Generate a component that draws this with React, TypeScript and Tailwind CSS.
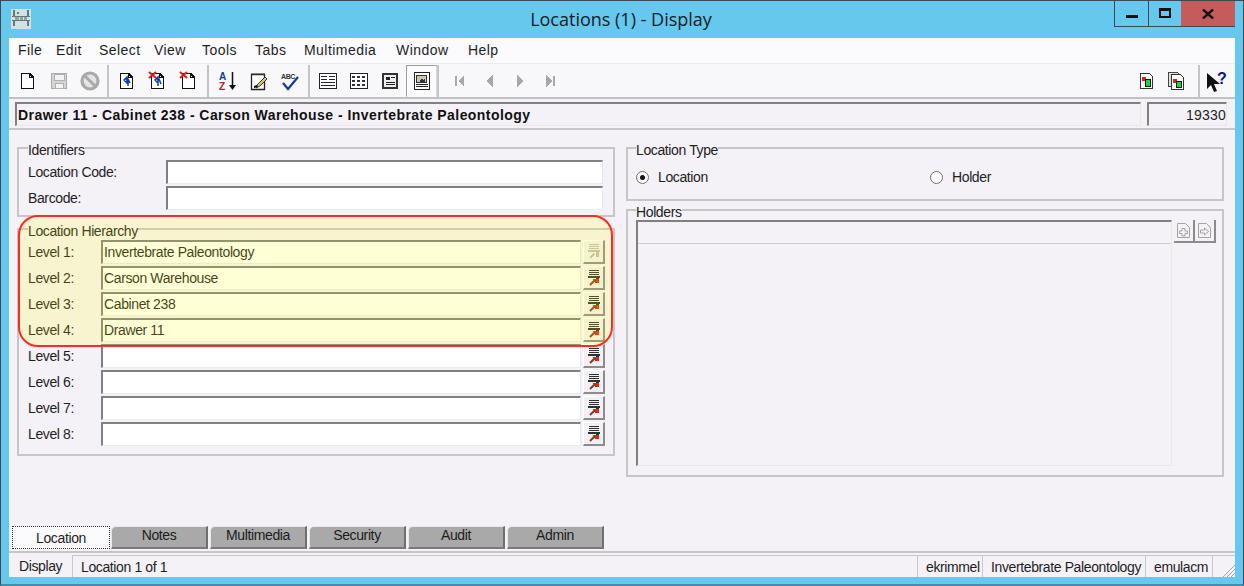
import React from "react";

const S = ({ children, w = 20, h = 20 }: { children: React.ReactNode; w?: number; h?: number }) => (
  <svg width={w} height={h} viewBox={`0 0 ${w} ${h}`} shapeRendering="crispEdges" fill="none">{children}</svg>
);

const Page = ({ x = 3, c = "#111" }: { x?: number; c?: string }) => (
  <path d={`M${x + .5} 2.500h8l4 4v11h-12z M${x + 8.500} 2.500v4h4`} fill="#fff" stroke={c} strokeWidth="1.500" />
);
const Cross = () => <path d="M1 1l7 6M8 1l-7 6" stroke="#e01818" strokeWidth="2" shapeRendering="auto" />;

const icons: Record<string, React.ReactNode> = {
  new: <S><Page /></S>,
  save: <S><path d="M2.500 2.500h15v15h-15z" fill="#d4d4d4" stroke="#aaa" strokeWidth="1.500" /><path d="M5 3h10v6H5zM6 12h8v5H6z" fill="#f2f2f2" stroke="#b0b0b0" /></S>,
  cancel: <S><g shapeRendering="auto"><circle cx="10" cy="10" r="8" stroke="#a9a9a9" strokeWidth="3.200" fill="#e4e4e4" /><path d="M5 5l10 10" stroke="#a9a9a9" strokeWidth="3" /></g></S>,
  rec1: <S><Page x={3} /><g shapeRendering="auto"><path d="M11 15V9M7 9l3-3v6zM8 8h3l2 4" stroke="#123a9a" strokeWidth="1.500" /></g></S>,
  rec2: <S><Page x={3} /><g shapeRendering="auto"><path d="M10 15V10M7 9l3-3v6zM8 8h3l2 5" stroke="#123a9a" strokeWidth="1.500" /><Cross /></g></S>,
  rec3: <S><Page x={3} /><g shapeRendering="auto"><Cross /></g></S>,
  sort: (
    <S>
      <g shapeRendering="auto">
        <text x="1" y="9" fontSize="10" fontWeight="700" fill="#123a9a" fontFamily="Liberation Sans, sans-serif">A</text>
        <text x="1" y="19" fontSize="10" fontWeight="700" fill="#a82828" fontFamily="Liberation Sans, sans-serif">Z</text>
        <path d="M14.500 1v15" stroke="#111" strokeWidth="1.500" />
        <path d="M11 14h7l-3.500 5z" fill="#111" />
      </g>
    </S>
  ),
  note: (
    <S>
      <g shapeRendering="auto">
        <path d="M2.500 3.500h13v15h-13z" fill="#fff" stroke="#222" strokeWidth="1.300" />
        <path d="M3 2v2M5 2v2M7 2v2M9 2v2M11 2v2M13 2v2M15 2v2" stroke="#444" />
        <path d="M8 14l8-8 2 2-7 7-4 2z" fill="#e8c83a" stroke="#123a9a" />
        <path d="M5 15l3-1 1 2-4 1z" fill="#111" />
      </g>
    </S>
  ),
  spell: (
    <S>
      <g shapeRendering="auto">
        <text x="1" y="8" fontSize="7" fontWeight="700" fill="#333" fontFamily="Liberation Sans, sans-serif">ABC</text>
        <path d="M3 12l5 6L18 6" stroke="#123a9a" strokeWidth="2.200" />
      </g>
    </S>
  ),
  list: (
    <S>
      <path d="M1.500 2.500h17v15h-17z" fill="#fff" stroke="#222" strokeWidth="1.500" />
      <path d="M3 5h6v1H3zM3 8h6v1H3zM3 11h14v1H3zM3 14h14v1H3zM11 5h6v1h-6zM11 8h6v1h-6z" fill="#222" />
    </S>
  ),
  grid: (
    <S>
      <path d="M1.500 2.500h17v15h-17z" fill="#fff" stroke="#222" strokeWidth="1.500" />
      <path d="M3 5h3v2H3zM8 5h3v2H8zM13 5h3v2h-3zM3 9h3v2H3zM8 9h3v2H8zM13 9h3v2h-3zM3 13h3v2H3zM8 13h3v2H8zM13 13h3v2h-3z" fill="#333" />
    </S>
  ),
  form: (
    <S>
      <path d="M2 2h16v16H2z" fill="#333" />
      <path d="M4 4h12v12H4z" fill="#eee" />
      <path d="M6 6h4v3H6zM6 11h9v1H6zM6 13h9v1H6zM11 6h4v1h-4z" fill="#222" />
    </S>
  ),
  media: (
    <S>
      <path d="M2.500 1.500h15v17h-15z" fill="#fff" stroke="#222" strokeWidth="1.500" />
      <path d="M4.500 4.500h10v7h-10z" fill="#c8c8c8" stroke="#333" />
      <path d="M6 6h2v2H6z" fill="#e8d020" />
      <path d="M8 10l2-3 1 2 2-2v4H8z" fill="#333" />
      <path d="M4 13h12v1H4zM4 15h12v1H4z" fill="#222" />
    </S>
  ),
  first: <S w={12} h={14}><path d="M1 2h2v10H1zM10 1v12L4 7z" fill="#a8a8a8" /></S>,
  prev: <S w={10} h={14}><path d="M8 1v12L1 7z" fill="#a8a8a8" /></S>,
  next: <S w={10} h={14}><path d="M2 1v12l7-6z" fill="#a8a8a8" /></S>,
  last: <S w={12} h={14}><path d="M9 2h2v10H9zM2 1v12l6-6z" fill="#a8a8a8" /></S>,
  copy1: <S><path d="M3.500 2.500h9l3 3v12h-12z" fill="#fff" stroke="#333" strokeWidth="1.300" /><path d="M5 6h4v4H5z" fill="#e02020" /><path d="M8 8h6v8H8z" fill="#111" /><path d="M9 9h4v6H9z" fill="#18d838" /></S>,
  copy2: <S><path d="M1.500 1.500h9l3 3v11h-12z" fill="#ddd" stroke="#444" /><path d="M4.500 3.500h9l3 3v12h-12z" fill="#fff" stroke="#333" strokeWidth="1.300" /><path d="M6 8h4v4H6z" fill="#e02020" /><path d="M9 10h6v7H9z" fill="#111" /><path d="M10 11h4v5h-4z" fill="#18d838" /></S>,
  help: (
    <S w={22} h={22}>
      <g shapeRendering="auto">
        <path d="M1 3v16l4-4 3 7 3-1-3-7h6z" fill="#111" />
        <text x="11" y="14" fontSize="16" fontWeight="700" fill="#12128c" fontFamily="Liberation Sans, sans-serif">?</text>
      </g>
    </S>
  ),
};

const Tool = ({ k, pressed, w = "w-[31px]" }: { k: string; pressed?: boolean; w?: string }) => (
  <div
    className={`${w} h-[32px] flex items-center justify-center shrink-0 ${
      pressed ? "bg-[#fbfafc] border-t border-l border-[#9c9c9c] border-r border-r-[#d8d8d8] border-b border-b-[#f8f8f8] ml-[1px]" : ""
    }`}
  >
    {icons[k]}
  </div>
);
const Sep = ({ w = "w-[6px]", j = "justify-center" }: { w?: string; j?: string }) => (
  <div className={`${w} h-[32px] flex ${j} shrink-0`}>
    <div className="w-[2px] h-full bg-[#c4c4c4]" />
  </div>
);

const Sunken = ({ children, className = "" }: { children?: React.ReactNode; className?: string }) => (
  <div
    className={`border-t-2 border-l-2 border-t-[#808080] border-l-[#808080] border-r border-b border-r-[#e9e9e9] border-b-[#e9e9e9] leading-[20px] px-[1px] overflow-hidden whitespace-nowrap ${className}`}
  >
    {children}
  </div>
);

const Group = ({ title, className = "", children }: { title: string; className?: string; children: React.ReactNode }) => (
  <fieldset className={`border-2 border-[#c6c6c8] min-w-0 ${className}`}>
    <legend className="relative top-[2px] px-0 leading-[12px] text-[#222] h-[12px]">{title}</legend>
    {children}
  </fieldset>
);

const PickIcon = ({ off }: { off?: boolean }) => (
  <svg width="14" height="17" viewBox="0 0 14 17" shapeRendering="crispEdges">
    <path d="M2 1h10v1H2zM2 3h10v1H2zM2 5h10v1H2zM1 7h12v1.500H1zM9 8h3v6H9z" fill={off ? "#bcbcb8" : "#303030"} />
    {off ? (
      <path d="M3 15l4-4" stroke="#bcbcb8" strokeWidth="2" />
    ) : (
      <>
        <path d="M6 10h6v4H8z" fill="#ee2010" />
        <path d="M3 16l5-5" stroke="#8a3820" strokeWidth="2" shapeRendering="auto" />
      </>
    )}
  </svg>
);

const Pick = ({ off }: { off?: boolean }) => (
  <div className="w-[22px] h-[24px] shrink-0 flex items-center justify-center border-r-2 border-b-2 border-r-[#8c8c8c] border-b-[#8c8c8c] border-t border-l border-t-white border-l-white bg-[#f3f0f5]">
    <PickIcon off={off} />
  </div>
);

const levels = ["Invertebrate Paleontology", "Carson Warehouse", "Cabinet 238", "Drawer 11", "", "", "", ""];

const Radio = ({ on, label }: { on?: boolean; label: string }) => (
  <div className="flex items-center gap-[9px]">
    <div className="w-[13px] h-[13px] rounded-full border border-[#707070] bg-white flex items-center justify-center">
      {on && <div className="w-[5px] h-[5px] rounded-full bg-[#111]" />}
    </div>
    <span>{label}</span>
  </div>
);

const Tab = ({ label }: { label: string }) => (
  <div className="w-[97px] h-[23px] mr-[2px] bg-[#a9a9a9] rounded-tl-[5px] border-t border-l border-t-[#e8e8e8] border-l-[#e8e8e8] border-r-2 border-b-2 border-r-[#6f6f6f] border-b-[#7a7a7a] flex items-start justify-center leading-[17px] text-[#1c1c1c] shrink-0">
    {label}
  </div>
);

const Status = ({ className = "", children }: { className?: string; children?: React.ReactNode }) => (
  <div className={`h-[22px] border-t border-l border-[#c8c8c8] pl-[8px] leading-[22px] whitespace-nowrap shrink-0 ${className}`}>{children}</div>
);

const menu: [string, string][] = [
  ["File", "w-[38px]"],
  ["Edit", "w-[43px]"],
  ["Select", "w-[55px]"],
  ["View", "w-[48px]"],
  ["Tools", "w-[53px]"],
  ["Tabs", "w-[49px]"],
  ["Multimedia", "w-[92px]"],
  ["Window", "w-[72px]"],
  ["Help", "w-[40px]"],
];

export default function App() {
  return (
    <div
      className="w-[1244px] h-[586px] overflow-hidden bg-[#65c8ec] border border-[#3d4a52] border-b-[2px] border-b-[#4c8ba4] flex flex-col text-[14px] tracking-[-0.38px] text-[#1e1e1e]"
      style={{ fontFamily: '"Liberation Sans", Arial, sans-serif' }}
    >
      <div className="h-[37px] shrink-0 flex items-start">
        <div className="w-[1124px] h-[37px] pt-[7px] relative shrink-0 flex justify-center">
          <svg className="absolute left-[10px] top-[8px]" width="20" height="20" viewBox="0 0 20 20" shapeRendering="crispEdges">
            <path d="M0 0h20v20H0z" fill="#cfe2e4" />
            <path d="M2 1h2v6H2zM16 1h2v6h-2zM6 3h2v2H6zM1 7h18v1H1zM1 11h18v1H1zM2 12h2v5H2zM16 12h2v5h-2z" fill="#6c7678" />
            <path d="M4 8h4v3H4zM9 8h3v3H9zM13 8h3v3h-3z" fill="#8ea4a6" />
          </svg>
          <span className="text-[18px] tracking-normal leading-[22px] text-[#102028] ml-[116px]" style={{ fontFamily: '"Open Sans", sans-serif' }}>
            Locations (1) - Display
          </span>
        </div>
        <div className="h-[26px] flex border-l border-b border-[#3d4a52] ml-[-11px] shrink-0">
          <div className="w-[34px] h-full flex items-center justify-center border-r border-[#3d4a52]">
            <div className="w-[12px] h-[3px] bg-[#111] mt-[6px]" />
          </div>
          <div className="w-[32px] h-full flex items-center justify-center">
            <div className="w-[12px] h-[10px] border-2 border-[#111] border-t-[3px] mb-[1px]" />
          </div>
          <div className="w-[54px] h-full flex items-center justify-center bg-[#c45c5c]">
            <svg width="12" height="10" viewBox="0 0 12 10"><path d="M1 .5l10 9M11 .5l-10 9" stroke="#111" strokeWidth="2.400" /></svg>
          </div>
        </div>
      </div>

      <div className="mx-[8px] mb-[7px] flex-1 min-h-0 bg-[#f5f2f7] flex flex-col relative">
        <div className="h-[25px] shrink-0 flex items-center pl-[9px] bg-[#fbfafc] leading-[25px] tracking-[0.45px]">
          {menu.map(([m, w]) => (
            <span key={m} className={`${w} shrink-0`}>{m}</span>
          ))}
        </div>

        <div className="h-[36px] shrink-0 flex items-center pl-[3px] pr-[1px] bg-[#f8f7fa] border-t border-[#ececec] border-b-2 border-b-[#c2c2c2]">
          <Tool k="new" /><Tool k="save" /><Tool k="cancel" /><Sep />
          <Tool k="rec1" /><Tool k="rec2" /><Tool k="rec3" /><Sep w="w-[8px]" />
          <Tool k="sort" /><Tool k="note" /><Tool k="spell" /><Sep w="w-[7px]" />
          <Tool k="list" /><Tool k="grid" /><Tool k="form" /><Tool k="media" pressed /><Sep w="w-[8px]" j="justify-start" />
          <Tool k="first" w="w-[30px]" /><Tool k="prev" w="w-[30px]" /><Tool k="next" w="w-[30px]" /><Tool k="last" w="w-[30px]" />
          <div className="flex-1" />
          <Tool k="copy1" w="w-[30px]" /><Tool k="copy2" w="w-[30px]" /><Sep w="w-[8px]" j="justify-end" />
          <Tool k="help" w="w-[34px]" />
        </div>

        <div className="h-[31px] shrink-0 flex items-start pt-[3px] pl-[6px] pr-[8px] gap-[6px] border-b-2 border-[#c6c6c8]">
          <Sunken className="flex-1 h-[24px] font-bold text-[#111] tracking-[0.45px] leading-[22px]">Drawer 11 - Cabinet 238 - Carson Warehouse - Invertebrate Paleontology</Sunken>
          <Sunken className="w-[80px] h-[24px] text-right pr-[0px] tracking-[0.2px] leading-[22px]">19330</Sunken>
        </div>

        <div className="flex-1 min-h-0 flex gap-[11px] pl-[8px] pr-[11px] pt-[12px]">
          <div className="w-[598px] shrink-0 flex flex-col gap-[6px]">
            <Group title="Identifiers" className="h-[75px] pl-[9px] pr-[10px]">
              <div className="flex flex-col gap-[2px] pt-[6px]">
                <div className="flex items-center">
                  <span className="w-[138px] shrink-0">Location Code:</span>
                  <Sunken className="flex-1 h-[24px] bg-white" />
                </div>
                <div className="flex items-center">
                  <span className="w-[138px] shrink-0">Barcode:</span>
                  <Sunken className="flex-1 h-[24px] bg-white" />
                </div>
              </div>
            </Group>
            <Group title="Location Hierarchy" className="h-[233px] pl-[9px] pr-[8px]">
              <div className="flex flex-col gap-[2px] pt-[5px]">
                {levels.map((v, i) => (
                  <div key={i} className="flex items-center">
                    <span className="w-[73px] shrink-0">Level {i + 1}:</span>
                    <Sunken className="w-[481px] h-[24px] bg-white">{v}</Sunken>
                    <div className="w-[2px] shrink-0" />
                    <Pick off={i === 0} />
                  </div>
                ))}
              </div>
            </Group>
          </div>

          <div className="flex-1 min-w-0 flex flex-col gap-[3px]">
            <Group title="Location Type" className="h-[59px] pl-[8px]">
              <div className="flex pt-[15px] leading-[16px]">
                <div className="w-[294px]"><Radio on label="Location" /></div>
                <Radio label="Holder" />
              </div>
            </Group>
            <Group title="Holders" className="h-[273px] pl-[8px] pr-[8px] pb-[8px]">
              <div className="flex gap-[2px] h-full pt-[4px]">
                <div className="w-[536px] h-[246px] border-t-2 border-l-2 border-[#808080] border-r border-b border-r-[#e9e9e9] border-b-[#e9e9e9] shrink-0">
                  <div className="h-[22px] border-b border-[#cfcfcf]" />
                </div>
                <div className="flex h-[24px]">
                  <div className="w-[21px] h-[23px] flex items-center justify-center border-r-2 border-b-2 border-[#8c8c8c]">
                    <svg width="15" height="17" viewBox="0 0 15 17" fill="none" stroke="#a4a4a4"><path d="M1.500 1.500h8l4 4v10h-12z" /><path d="M6 6.500h3v2.500h2.500v2.500H9V14H6v-2.500H3.500V9H6z" /></svg>
                  </div>
                  <div className="w-[21px] h-[23px] flex items-center justify-center border-r-2 border-b-2 border-[#8c8c8c]">
                    <svg width="15" height="17" viewBox="0 0 15 17" fill="none" stroke="#a4a4a4"><path d="M1.500 1.500h8l4 4v10h-12z" /><path d="M3.500 8h4V6l4 3.500-4 3.500v-2h-4z" /></svg>
                  </div>
                </div>
              </div>
            </Group>
          </div>
        </div>

        <div className="h-[25px] shrink-0 flex items-start pl-[3px] mt-[-2px]">
          <div className="w-[98px] h-[23px] mr-[1px] bg-[#fbfafc] border border-dotted border-[#333] flex items-center justify-center leading-[17px] pt-[1px] shrink-0">
            Location
          </div>
          <Tab label="Notes" />
          <Tab label="Multimedia" />
          <Tab label="Security" />
          <Tab label="Audit" />
          <Tab label="Admin" />
        </div>

        <div className="h-[26px] shrink-0 flex items-end border-t-2 border-[#c6c6c8]">
          <Status className="w-[59px] border-t-0 border-l-0 pl-[10px]">Display</Status>
          <div className="w-[4px] shrink-0" />
          <Status className="w-[845px] pl-[6px]">Location 1 of 1</Status>
          <Status className="w-[65px] pl-[6px]">ekrimmel</Status>
          <Status className="w-[163px] pl-[6px]">Invertebrate Paleontology</Status>
          <Status className="w-[67px] pl-[6px]">emulacm</Status>
          <div className="flex-1 h-[22px] border-t border-l border-[#c8c8c8] flex items-end justify-end">
            <svg width="14" height="14" viewBox="0 0 14 14" stroke="#a8a8a8"><path d="M2 14L14 2M6 14l8-8M10 14l4-4" /></svg>
          </div>
        </div>

        <div className="absolute left-[9px] top-[177px] w-[595px] h-[132px] rounded-[20px] border-2 border-[#ff2a20] bg-[#ffff00]/[0.16] pointer-events-none" />
      </div>
    </div>
  );
}
